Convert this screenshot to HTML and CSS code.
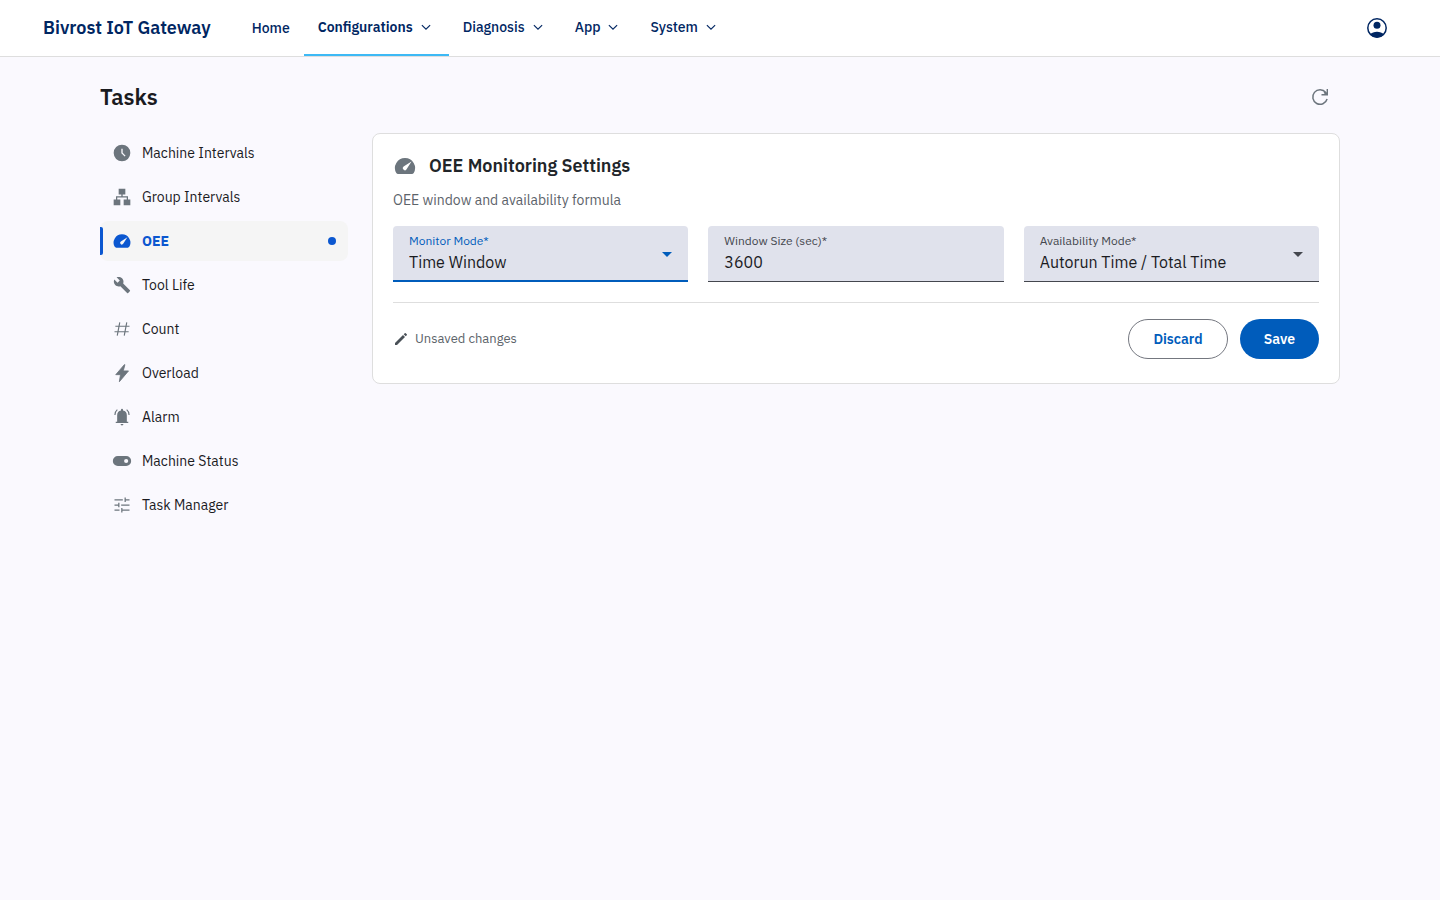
FILE: index.html
```html
<!DOCTYPE html>
<html lang="en">
<head>
    <meta charset="UTF-8">
    <meta name="viewport" content="width=device-width, initial-scale=1.0">
    <title>Bivrost IoT Gateway</title>
    <link rel="stylesheet" href="styles.css">
</head>
<body>
    <header class="topbar">
        <a href="#" class="brand">Bivrost IoT Gateway</a>
        <nav class="menu">
            <a href="#" class="menu-item">Home</a>
            <button type="button" class="menu-item dropdown active">
                Configurations
                <svg viewBox="0 0 24 24"><path d="M6.5 9.5l5.5 5.5 5.5-5.5"></path></svg>
            </button>
            <button type="button" class="menu-item dropdown">
                Diagnosis
                <svg viewBox="0 0 24 24"><path d="M6.5 9.5l5.5 5.5 5.5-5.5"></path></svg>
            </button>
            <button type="button" class="menu-item dropdown">
                App
                <svg viewBox="0 0 24 24"><path d="M6.5 9.5l5.5 5.5 5.5-5.5"></path></svg>
            </button>
            <button type="button" class="menu-item dropdown">
                System
                <svg viewBox="0 0 24 24"><path d="M6.5 9.5l5.5 5.5 5.5-5.5"></path></svg>
            </button>
        </nav>
        <button type="button" class="icon-btn account" aria-label="Account">
            <svg viewBox="0 0 24 24">
                <circle cx="12" cy="12" r="9.2" fill="none" stroke="currentColor" stroke-width="1.5"></circle>
                <circle cx="12" cy="9.2" r="3.5"></circle>
                <path d="M5 18.2c1.8-1.5 4.2-2.5 7-2.5s5.2 1 7 2.500c-1.7 2.1-4.2 3.3-7 3.3s-5.3-1.2-7-3.3z"></path>
            </svg>
        </button>
    </header>

    <main class="page">
        <div class="page-header">
            <h1>Tasks</h1>
            <button type="button" class="icon-btn refresh" aria-label="Refresh">
                <svg viewBox="0 0 24 24">
                    <path d="M19.1 14a7.3 7.3 0 1 1-1.3-6.5l1.7 2" fill="none" stroke="currentColor" stroke-width="1.5"></path>
                    <path d="M18.6 4H20v6.5h-6.5V9h3.3l-1.2-1.2 1-1 2 1.2z"></path>
                </svg>
            </button>
        </div>

        <div class="layout">
            <nav class="sidebar">
                <a href="#" class="side-item">
                    <svg viewBox="0 0 24 24"><path fill-rule="evenodd" d="M12 2a10 10 0 1 0 0 20 10 10 0 0 0 0-20zm-.8 5h1.6v4.700l3.5 3.5-1.1 1.1-4-4z"></path></svg>
                    Machine Intervals
                </a>
                <a href="#" class="side-item">
                    <svg viewBox="0 0 24 24"><path d="M8 2h8v7h-3.2v2.2h6.4V15H22v7h-8v-7h3.7v-2.300H6.300V15H10v7H2v-7h2.800v-3.800h6.400V9H8z"></path></svg>
                    Group Intervals
                </a>
                <a href="#" class="side-item active">
                    <svg viewBox="0 0 24 24"><path fill-rule="evenodd" d="M12 4a10 10 0 0 1 8.7 15q-.6 1-1.7 1H5q-1.1 0-1.7-1A10 10 0 0 1 12 4zm6.500 3.500l-7.900 5.100a2 2 0 1 0 2.800 2.800z"></path></svg>
                    OEE
                    <span class="dot"></span>
                </a>
                <a href="#" class="side-item">
                    <svg viewBox="-1.5 -1.5 27 27"><path d="M22.7 19l-9.1-9.1c.9-2.3.4-5-1.5-6.9-2-2-5-2.4-7.4-1.3L9 6 6 9 1.6 4.7C.4 7.1.9 10.1 2.9 12.1c1.9 1.9 4.6 2.4 6.9 1.5l9.1 9.1c.4.4 1 .4 1.4 0l2.3-2.3c.5-.4.5-1.1.1-1.4z"></path></svg>
                    Tool Life
                </a>
                <a href="#" class="side-item">
                    <svg viewBox="0 0 24 24"><path d="M9.3 4L6.3 20M17.7 4l-3 16M4 8.7h17M3 15.3h17" fill="none" stroke="currentColor" stroke-width="1.4"></path></svg>
                    Count
                </a>
                <a href="#" class="side-item">
                    <svg viewBox="0 0 24 24"><path d="M14.8 2L4.5 14h5.7l-1.4 8.5L19.8 9.5h-6.300L15.5 2z" stroke="currentColor" stroke-linejoin="round"></path></svg>
                    Overload
                </a>
                <a href="#" class="side-item">
                    <svg viewBox="0 0 24 24">
                        <path d="M4.5 19.2v-1.4h1.7V10a5.8 5.8 0 0 1 4.6-5.7V3.2a1.2 1.2 0 0 1 2.4 0v1.1A5.8 5.8 0 0 1 17.8 10v7.8h1.7v1.4zM10.3 20.5h3.4a1.7 1.7 0 0 1-3.4 0z"></path>
                        <path d="M3.5 9.5c0-2.5 1-4.7 2.9-6.3M20.5 9.500c0-2.5-1-4.7-2.9-6.3" fill="none" stroke="currentColor" stroke-width="1.4"></path>
                    </svg>
                    Alarm
                </a>
                <a href="#" class="side-item">
                    <svg viewBox="0 0 24 24"><path fill-rule="evenodd" d="M7 6h10a6 6 0 0 1 0 12H7A6 6 0 0 1 7 6zm10 3.5a2.5 2.5 0 1 0 0 5 2.5 2.5 0 0 0 0-5z"></path></svg>
                    Machine Status
                </a>
                <a href="#" class="side-item">
                    <svg viewBox="0 0 24 24"><path d="M3 5.7h10M16.5 5.7H21M15.8 3v5.4M3 12h4.500M11 12h10M8.2 9.3v5.4M3 18.3h6M12.5 18.3H21M11.8 15.6V21" fill="none" stroke="currentColor" stroke-width="1.5"></path></svg>
                    Task Manager
                </a>
            </nav>

            <form class="card">
                <div class="card-title">
                    <svg viewBox="0 0 24 24"><path fill-rule="evenodd" d="M12 4a10 10 0 0 1 8.7 15q-.6 1-1.7 1H5q-1.1 0-1.7-1A10 10 0 0 1 12 4zm6.500 3.500l-7.900 5.100a2 2 0 1 0 2.800 2.800z"></path></svg>
                    <h2>OEE Monitoring Settings</h2>
                </div>
                <p class="card-desc">OEE window and availability formula</p>

                <div class="fields">
                    <div class="field focused">
                        <label for="monitor-mode">Monitor Mode*</label>
                        <select id="monitor-mode">
                            <option>Time Window</option>
                        </select>
                        <svg class="arrow" viewBox="0 0 10 5"><path d="M0 0h10L5 5z"></path></svg>
                    </div>
                    <div class="field">
                        <label for="window-size">Window Size (sec)*</label>
                        <input id="window-size" type="text" inputmode="numeric" value="3600">
                    </div>
                    <div class="field">
                        <label for="availability-mode">Availability Mode*</label>
                        <select id="availability-mode">
                            <option>Autorun Time / Total Time</option>
                        </select>
                        <svg class="arrow" viewBox="0 0 10 5"><path d="M0 0h10L5 5z"></path></svg>
                    </div>
                </div>

                <div class="card-footer">
                    <div class="status">
                        <svg viewBox="0 0 24 24"><path d="M3 18v3h3L18 9l-3-3zM16 5l3 3 1.700-1.700q.6-.7 0-1.400l-1.600-1.600q-.7-.6-1.400 0z"></path></svg>
                        Unsaved changes
                    </div>
                    <button type="button" class="btn btn-outline">Discard</button>
                    <button type="submit" class="btn btn-primary">Save</button>
                </div>
            </form>
        </div>
    </main>
</body>
</html>
```
FILE: styles.css
```css
* {
    margin: 0;
    padding: 0;
    box-sizing: border-box;
}

body {
    min-height: 100vh;
    background: #faf9fe;
    color: #1a1b1f;
    font-family: 'IBM Plex Sans', Roboto, 'Noto Sans', sans-serif;
    font-size: 14px;
    line-height: 20px;
}

button,
input,
select {
    font-family: inherit;
    color: inherit;
    background: none;
    border: none;
    outline: none;
}

button {
    cursor: pointer;
}

a {
    color: inherit;
    text-decoration: none;
}

svg {
    display: block;
    flex-shrink: 0;
    fill: currentColor;
}

/* Top bar */
.topbar {
    display: flex;
    align-items: center;
    padding: 0 43px;
    background: #fff;
    border-bottom: 1px solid #dedede;
    color: #002662;
}

.brand {
    font-size: 18px;
    font-weight: 600;
    line-height: 24px;
    margin-right: 27px;
}

.menu {
    display: flex;
    flex: 1;
}

.menu-item {
    display: flex;
    align-items: center;
    gap: 4px;
    height: 56px;
    padding: 0 14px;
    font-size: 14px;
    font-weight: 500;
    line-height: 20px;
}

.menu-item.dropdown {
    border-bottom: 2px solid transparent;
}

.menu-item svg {
    width: 18px;
    height: 18px;
    fill: none;
    stroke: currentColor;
    stroke-width: 1.5;
}

.menu-item.active {
    border-bottom-color: #3db9f5;
    font-weight: 600;
}

.icon-btn {
    display: flex;
    align-items: center;
    justify-content: center;
    width: 40px;
    height: 40px;
    border-radius: 50%;
}

.icon-btn svg {
    width: 24px;
    height: 24px;
}

.refresh {
    color: #6c757d;
}

/* Page */
.page {
    max-width: 1280px;
    margin: 0 auto;
    padding: 20px;
}

.page-header {
    display: flex;
    align-items: center;
    justify-content: space-between;
    margin-bottom: 16px;
}

h1 {
    font-size: 22px;
    font-weight: 600;
    line-height: 32px;
}

.layout {
    display: flex;
    align-items: flex-start;
    gap: 24px;
}

/* Sidebar */
.sidebar {
    display: flex;
    flex-direction: column;
    gap: 4px;
    width: 248px;
    flex-shrink: 0;
}

.side-item {
    position: relative;
    display: flex;
    align-items: center;
    gap: 10px;
    height: 40px;
    padding: 0 12px;
    border-radius: 8px;
}

.side-item svg {
    width: 20px;
    height: 20px;
    color: #6c757d;
}

.side-item.active {
    background: #f5f5f5;
    color: #0b57d0;
    font-weight: 700;
}

.side-item.active svg {
    color: inherit;
}

.side-item.active::before {
    content: '';
    position: absolute;
    left: 0;
    top: 6px;
    bottom: 6px;
    width: 3px;
    border-radius: 0 2px 2px 0;
    background: #0b57d0;
}

.dot {
    width: 8px;
    height: 8px;
    margin-left: auto;
    border-radius: 50%;
    background: #0b57d0;
}

/* Settings card */
.card {
    flex: 1;
    padding: 20px 20px 24px;
    background: #fff;
    border: 1px solid #dedede;
    border-radius: 8px;
}

.card-title {
    display: flex;
    align-items: center;
    gap: 12px;
    margin-bottom: 12px;
}

.card-title svg {
    width: 24px;
    height: 24px;
    color: #6c757d;
}

h2 {
    font-size: 18px;
    font-weight: 600;
    line-height: 24px;
    color: #212529;
}

.card-desc {
    margin-bottom: 16px;
    color: #5c636a;
}

.fields {
    display: grid;
    grid-template-columns: repeat(3, 1fr);
    gap: 20px;
    padding-bottom: 20px;
    border-bottom: 1px solid #dedede;
}

.field {
    position: relative;
    height: 56px;
    background: #e0e2ec;
    border-bottom: 1px solid #44474e;
    border-radius: 4px 4px 0 0;
    color: #44474e;
}

/* the label floats over the control so the whole field is clickable */
.field label {
    position: absolute;
    left: 16px;
    top: 7px;
    font-size: 12px;
    line-height: 16px;
    pointer-events: none;
}

.field input,
.field select {
    display: block;
    width: 100%;
    height: 54px;
    padding: 18px 16px 0;
    appearance: none;
    font-size: 16px;
    color: #1a1b1f;
}

.field .arrow {
    position: absolute;
    right: 16px;
    top: 26px;
    width: 10px;
    height: 5px;
    pointer-events: none;
}

.field.focused {
    border-bottom: 2px solid #005cbb;
    color: #005cbb;
}

.card-footer {
    display: flex;
    align-items: center;
    gap: 12px;
    padding-top: 16px;
}

.status {
    display: flex;
    align-items: center;
    gap: 6px;
    margin-right: auto;
    font-size: 13px;
    color: #5c636a;
}

.status svg {
    width: 16px;
    height: 16px;
    color: #495057;
}

.btn {
    height: 40px;
    padding: 0 24px;
    border-radius: 20px;
    font-size: 14px;
    font-weight: 600;
    line-height: 20px;
}

.btn-outline {
    border: 1px solid #74777f;
    color: #005cbb;
}

.btn-primary {
    background: #005cbb;
    color: #fff;
}
```
